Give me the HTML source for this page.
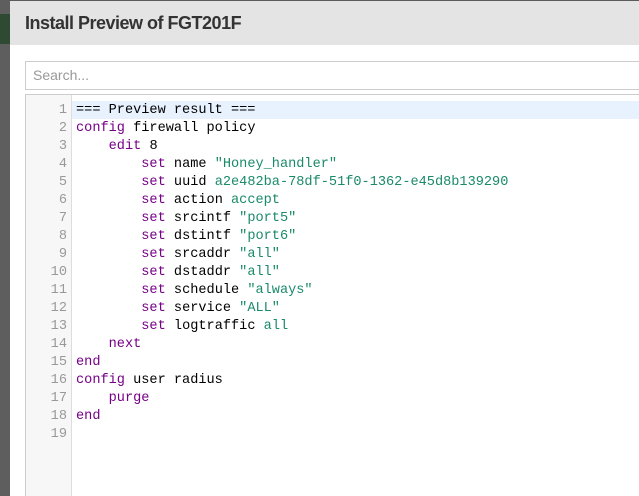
<!DOCTYPE html>
<html><head><style>
html,body{margin:0;width:639px;height:496px;overflow:hidden}
body{background:#5b5b5b;font-family:"Liberation Sans",sans-serif;position:relative}
.bd{position:absolute;left:0;top:0;width:10px;height:496px;background:#5e5e5e}
.bd .g{position:absolute;top:14px;left:0;width:10px;height:30px;background:#2f4a33}
.dlg{position:absolute;left:10px;top:1px;width:629px;height:495px;background:#fff;overflow:hidden}
.hd{height:44px;background:#e4e4e4;font-size:18px;font-weight:bold;color:#333;padding-left:15px;line-height:44px;letter-spacing:-0.5px}
.search{position:absolute;left:15px;top:60px;width:620px;border:1px solid #ccc;font-size:14px;color:#999;line-height:27px;padding-left:7px;box-sizing:border-box;height:29px}
.ed{position:absolute;left:15px;top:93px;width:620px;height:410px;border:1px solid #ccc}
.gut{position:absolute;left:0;top:0;width:45px;height:100%;background:#f7f7f7;border-right:1px solid #ddd}
.code{position:absolute;left:0;top:6px;width:100%;font-family:"Liberation Mono",monospace;font-size:13.6px}
.l{height:18px;line-height:19px;white-space:pre;position:relative;color:#000}
.l .n{position:absolute;left:0;width:41px;text-align:right;color:#999}
.l .t{position:absolute;left:50px}
.hl{background:#e8f2fe;margin-left:46px}
.hl .n{left:-46px}.hl .t{left:4px}
.k{color:#708}.s{color:#1a8a6a}.v{color:#1a8a6a}
</style></head><body>
<div class="bd"><div class="g"></div></div>
<div class="dlg">
<div class="hd">Install Preview of FGT201F</div>
<div class="search">Search...</div>
<div class="ed"><div class="gut"></div>
<div class="code">
<div class="l hl"><span class="n">1</span><span class="t">=== Preview result ===</span></div>
<div class="l"><span class="n">2</span><span class="t"><span class="k">config</span> firewall policy</span></div>
<div class="l"><span class="n">3</span><span class="t">    <span class="k">edit</span> 8</span></div>
<div class="l"><span class="n">4</span><span class="t">        <span class="k">set</span> name <span class="s">"Honey_handler"</span></span></div>
<div class="l"><span class="n">5</span><span class="t">        <span class="k">set</span> uuid <span class="v">a2e482ba-78df-51f0-1362-e45d8b139290</span></span></div>
<div class="l"><span class="n">6</span><span class="t">        <span class="k">set</span> action <span class="v">accept</span></span></div>
<div class="l"><span class="n">7</span><span class="t">        <span class="k">set</span> srcintf <span class="s">"port5"</span></span></div>
<div class="l"><span class="n">8</span><span class="t">        <span class="k">set</span> dstintf <span class="s">"port6"</span></span></div>
<div class="l"><span class="n">9</span><span class="t">        <span class="k">set</span> srcaddr <span class="s">"all"</span></span></div>
<div class="l"><span class="n">10</span><span class="t">        <span class="k">set</span> dstaddr <span class="s">"all"</span></span></div>
<div class="l"><span class="n">11</span><span class="t">        <span class="k">set</span> schedule <span class="s">"always"</span></span></div>
<div class="l"><span class="n">12</span><span class="t">        <span class="k">set</span> service <span class="s">"ALL"</span></span></div>
<div class="l"><span class="n">13</span><span class="t">        <span class="k">set</span> logtraffic <span class="v">all</span></span></div>
<div class="l"><span class="n">14</span><span class="t">    <span class="k">next</span></span></div>
<div class="l"><span class="n">15</span><span class="t"><span class="k">end</span></span></div>
<div class="l"><span class="n">16</span><span class="t"><span class="k">config</span> user radius</span></div>
<div class="l"><span class="n">17</span><span class="t">    <span class="k">purge</span></span></div>
<div class="l"><span class="n">18</span><span class="t"><span class="k">end</span></span></div>
<div class="l"><span class="n">19</span><span class="t"></span></div>
</div></div>
</div>
</body></html>
